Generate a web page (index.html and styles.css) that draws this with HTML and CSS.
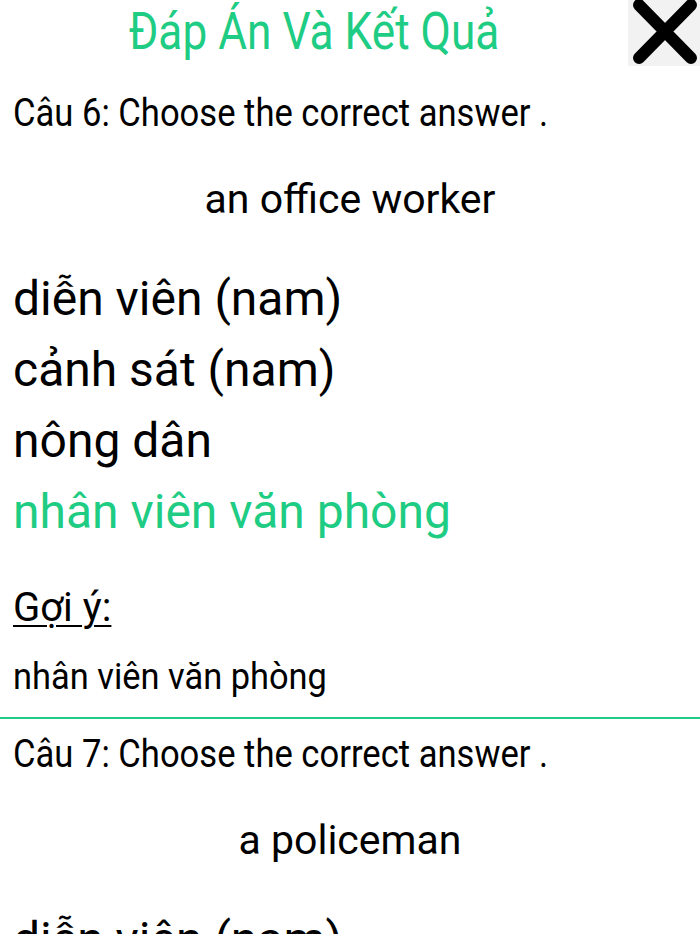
FILE: index.html
```html
<!DOCTYPE html>
<html lang="vi">
<head>
    <meta charset="UTF-8">
    <meta name="viewport" content="width=device-width, initial-scale=1.0">
    <title>Đáp Án Và Kết Quả</title>
    <link rel="stylesheet" href="styles.css">
</head>
<body>
    <header class="top-bar">
        <h1 class="title"><span class="narrow">Đáp Án Và Kết Quả</span></h1>
        <button class="close-btn" aria-label="Đóng">
            <svg viewBox="0 0 72 66" width="72" height="66">
                <path d="M11 5 L63 58 M63 5 L11 58" stroke="#000" stroke-width="12" stroke-linecap="round"/>
            </svg>
        </button>
    </header>

    <div class="result-list">
        <section class="question">
            <p class="question-label"><span class="narrow">Câu 6: Choose the correct answer .</span></p>
            <p class="question-word">an office worker</p>
            <ul class="answers">
                <li>diễn viên (nam)</li>
                <li>cảnh sát (nam)</li>
                <li>nông dân</li>
                <li class="correct">nhân viên văn phòng</li>
            </ul>
            <p class="hint-label"><span class="narrow">Gợi ý:</span></p>
            <p class="hint-text"><span class="narrow">nhân viên văn phòng</span></p>
        </section>

        <section class="question">
            <p class="question-label"><span class="narrow">Câu 7: Choose the correct answer .</span></p>
            <p class="question-word">a policeman</p>
            <ul class="answers">
                <li>diễn viên (nam)</li>
                <li>cảnh sát (nam)</li>
                <li>nông dân</li>
                <li>nhân viên văn phòng</li>
            </ul>
        </section>
    </div>
</body>
</html>
```

FILE: styles.css
```css
:root {
    --accent-green: #1fcc83;
    --text-dark: #000;
    --close-bg: #f2f2f2;
}

* {
    margin: 0;
    padding: 0;
    box-sizing: border-box;
}

html, body {
    height: 100%;
}

body {
    background: #fff;
    color: var(--text-dark);
    font-family: Roboto, "Noto Sans", sans-serif;
    overflow: hidden;
}

/* condensed look of the app font */
.narrow {
    display: inline-block;
    transform: scaleX(0.91);
    transform-origin: left center;
    white-space: nowrap;
}

.top-bar {
    display: flex;
    align-items: flex-start;
    height: 66px;
}

.title {
    flex: 1;
    text-align: center;
    color: var(--accent-green);
    font-size: 52px;
    font-weight: 400;
    line-height: 66px;
    margin-top: -1px;
}

.title .narrow {
    transform: scaleX(0.85);
    transform-origin: center center;
}

.close-btn {
    width: 72px;
    height: 66px;
    background: var(--close-bg);
    border: none;
    display: flex;
    align-items: center;
    justify-content: center;
}

.question {
    padding: 0 13px;
}

.question + .question {
    border-top: 2px solid var(--accent-green);
    margin-top: 15px;
}

.question-label {
    font-size: 38px;
    line-height: 50px;
    padding-top: 22px;
}

.question + .question .question-label {
    padding-top: 10px;
}

.question-word {
    text-align: center;
    font-size: 41px;
    line-height: 50px;
    margin-top: 36px;
}

.answers {
    list-style: none;
    margin-top: 39px;
}

.answers li {
    font-size: 48px;
    line-height: 71px;
}

.answers .correct {
    color: var(--accent-green);
}

.hint-label {
    font-size: 40px;
    line-height: 50px;
    margin-top: 36px;
}

.hint-label .narrow {
    transform: none;
    text-decoration: underline;
    text-decoration-thickness: 2px;
    text-underline-offset: 4px;
}

.hint-text {
    font-size: 37px;
    line-height: 50px;
    margin-top: 19px;
}

.hint-text .narrow {
    transform: scaleX(0.93);
}
```
